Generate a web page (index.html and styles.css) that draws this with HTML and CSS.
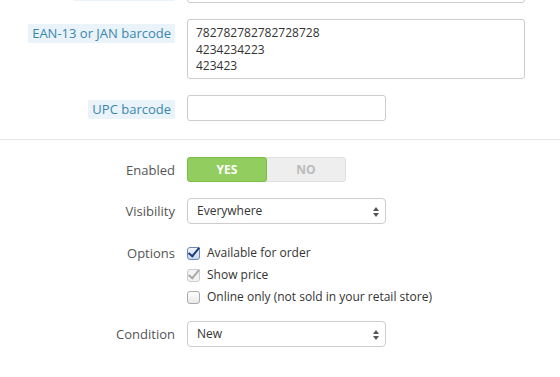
FILE: index.html
```html
<!DOCTYPE html>
<html lang="en">
<head>
  <meta charset="UTF-8">
  <title>Product settings</title>
  <link rel="stylesheet" href="styles.css">
</head>
<body>
  <div class="form">
    <div class="row">
      <div class="label"><span class="hint">Reference code</span></div>
      <div class="field"><input class="text wide" type="text"></div>
    </div>

    <div class="row">
      <div class="label"><span class="hint">EAN-13 or JAN barcode</span></div>
      <div class="field">
        <div class="area">782782782782728728<br>4234234223<br>423423</div>
      </div>
    </div>

    <div class="row">
      <div class="label"><span class="hint">UPC barcode</span></div>
      <div class="field"><input class="text" type="text"></div>
    </div>

    <hr class="sep">

    <div class="row mid">
      <div class="label">Enabled</div>
      <div class="field">
        <div class="switch">
          <span class="on">YES</span>
          <span class="off">NO</span>
        </div>
      </div>
    </div>

    <div class="row mid">
      <div class="label">Visibility</div>
      <div class="field">
        <div class="select">Everywhere<span class="arrows"><i class="up"></i><i class="down"></i></span></div>
      </div>
    </div>

    <div class="row opts">
      <div class="label">Options</div>
      <div class="field checks">
        <div class="check"><span class="box checked"></span>Available for order</div>
        <div class="check"><span class="box grey"></span>Show price</div>
        <div class="check"><span class="box"></span>Online only (not sold in your retail store)</div>
      </div>
    </div>

    <div class="row mid">
      <div class="label">Condition</div>
      <div class="field">
        <div class="select">New<span class="arrows"><i class="up"></i><i class="down"></i></span></div>
      </div>
    </div>
  </div>
</body>
</html>
```

FILE: styles.css
```css
body {
  margin: 0;
  background: #fff;
  font-family: 'Open Sans', sans-serif;
  font-size: 12px;
  color: #555;
}
.form {
  margin-top: -23px;
}
.row {
  display: grid;
  grid-template-columns: 175px 1fr;
  column-gap: 12px;
  margin-bottom: 16px;
}
.row.mid { align-items: center; }
.label {
  text-align: right;
  padding-top: 5px;
  font-size: 13px;
}
.row.mid .label { padding-top: 0; }
.hint {
  display: inline-block;
  background: #e9f3f9;
  color: #3a87ad;
  padding: 0 4px;
  border-radius: 2px;
  line-height: 19px;
  font-size: 13px;
}
.text {
  display: block;
  box-sizing: border-box;
  width: 199px; height: 26px;
  border: 1px solid #ccc;
  border-radius: 3px;
  margin: 0;
  font: inherit;
}
.text.wide { width: 338px; }
.area {
  box-sizing: border-box;
  width: 338px; height: 60px;
  border: 1px solid #ccc;
  border-radius: 3px;
  padding: 5px 8px;
  line-height: 16.5px;
  color: #333;
}
.sep {
  border: 0;
  border-top: 1px solid #e6e6e6;
  margin: 18px 0 17px;
}
.switch {
  display: flex;
  width: 159px; height: 25px;
  box-sizing: border-box;
  border-radius: 3px;
  background: #eee;
  border: 1px solid #e0e0e0;
  font-weight: bold;
  font-size: 12px;
}
.switch span {
  flex: 1;
  display: flex; align-items: center; justify-content: center;
}
.switch .on {
  flex: 0 0 80px;
  box-sizing: border-box;
  margin: -1px 0 -1px -1px;
  background: #92cd60;
  border: 1px solid #7bbf42;
  border-radius: 3px;
  color: #fff;
}
.switch .off { color: #bbb; }
.select {
  position: relative;
  box-sizing: border-box;
  width: 199px; height: 26px;
  border: 1px solid #ccc;
  border-radius: 4px;
  padding: 0 9px;
  line-height: 24px;
  color: #333;
}
.arrows {
  position: absolute;
  right: 6px; top: 8px;
  display: flex; flex-direction: column; gap: 2px;
}
.arrows i {
  width: 0; height: 0;
  border-left: 3px solid transparent;
  border-right: 3px solid transparent;
}
.arrows .up { border-bottom: 4px solid #555; }
.arrows .down { border-top: 4px solid #555; }
.opts { padding-top: 4px; margin-bottom: 15px; }
.opts .label { padding-top: 0; line-height: 18px; }
.checks {
  display: flex; flex-direction: column;
  gap: 4px;
}
.check {
  display: flex; align-items: center;
  gap: 7px;
  line-height: 18px;
  color: #333;
}
.box {
  position: relative;
  width: 11px; height: 11px;
  border: 1px solid #aaa;
  border-radius: 3px;
  background: linear-gradient(#fff, #e8e8e8);
}
.box.checked::after,
.box.grey::after {
  content: "";
  position: absolute;
  left: 3px; top: -3px;
  width: 4px; height: 10px;
  border-right: 2px solid #1d3a7a;
  border-bottom: 2px solid #1d3a7a;
  transform: rotate(40deg);
}
.box.checked { border-color: #6b88b5; background: linear-gradient(#eef3fb, #c9d8ee); }
.box.grey { border-color: #ccc; background: #f3f3f3; }
.box.grey::after { border-color: #aaa; }
```
